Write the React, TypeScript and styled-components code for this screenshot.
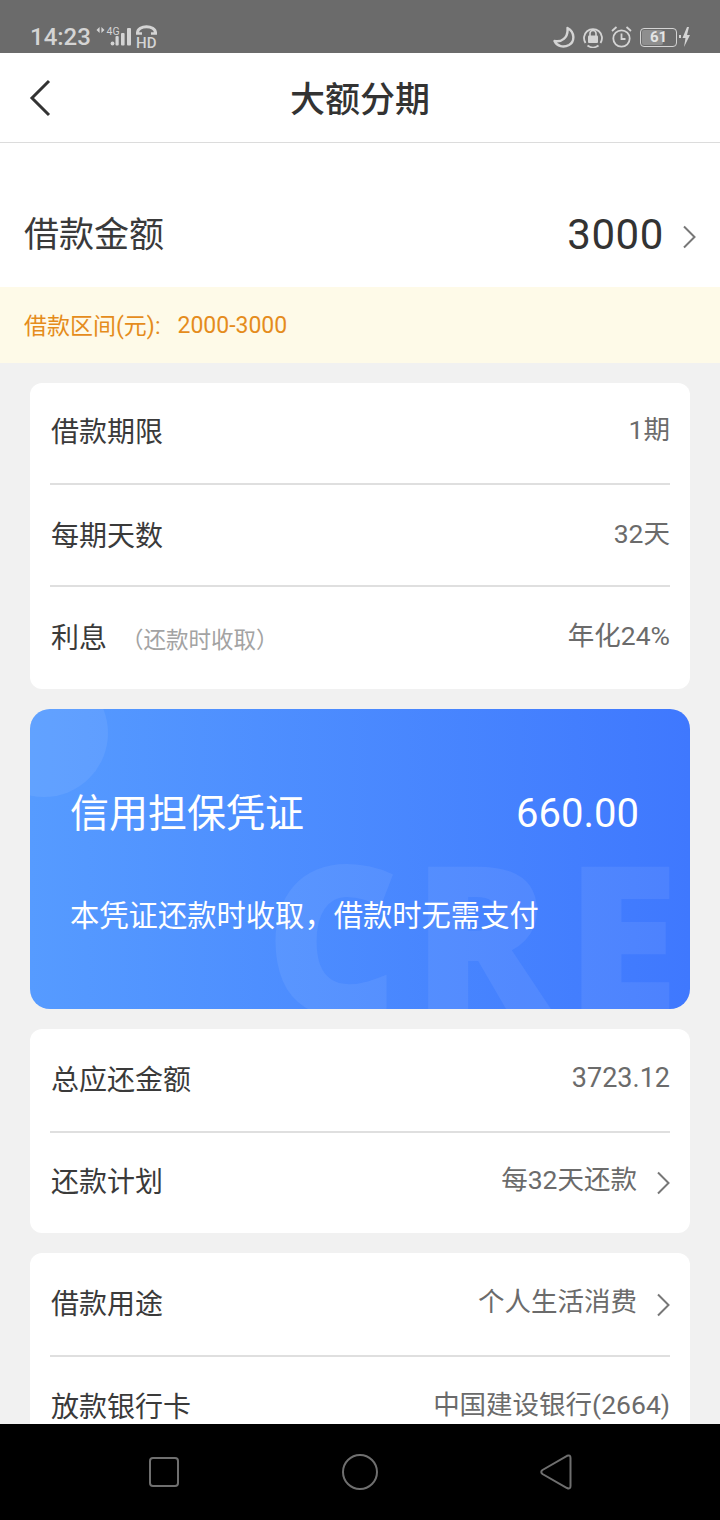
import styled, { createGlobalStyle } from 'styled-components';

const GlobalStyle = createGlobalStyle`
  html, body {
    margin: 0;
    padding: 0;
    background: #000;
  }
  * {
    box-sizing: border-box;
  }
`;

const Screen = styled.div`
  width: 720px;
  height: 1520px;
  display: flex;
  flex-direction: column;
  overflow: hidden;
  background: #f1f1f1;
  font-family: Roboto, "Noto Sans CJK SC", sans-serif;
  color: #333;
`;

const StatusBar = styled.div`
  height: 53px;
  flex: none;
  background: #6b6b6b;
  color: #d4d4d4;
  display: flex;
  align-items: center;
  justify-content: space-between;
  padding: 21px 30px 0;
`;

const StatusGroup = styled.div<{ $gap: number }>`
  display: flex;
  align-items: center;
  gap: ${(p) => p.$gap}px;
`;

const Clock = styled.span`
  font-size: 24px;
  font-weight: 500;
  line-height: 28px;
`;

const HeaderBar = styled.header`
  height: 90px;
  flex: none;
  background: #fff;
  border-bottom: 1px solid #dcdcdc;
  padding-top: 6px;
  display: flex;
  align-items: center;
  justify-content: center;
  position: relative;
`;

const BackButton = styled.svg`
  position: absolute;
  left: 29px;
  top: 26px;
`;

const Title = styled.h1`
  margin: 0;
  font-size: 35px;
  font-weight: 500;
  color: #333;
  line-height: 48px;
`;

const Content = styled.main`
  flex: 1;
  min-height: 0;
  overflow: hidden;
`;

const AmountRow = styled.div`
  height: 144px;
  padding: 41px 24px 0;
  background: #fff;
  display: flex;
  align-items: center;
  justify-content: space-between;
`;

const AmountLabel = styled.span`
  font-size: 35px;
  line-height: 50px;
  color: #3a3a3a;
`;

const AmountValue = styled.span`
  display: flex;
  align-items: center;
  gap: 19px;
  font-size: 42px;
  line-height: 50px;
  color: #333;
  letter-spacing: 0.6px;
  margin-top: -2px;
`;

const Notice = styled.div`
  height: 76px;
  padding: 0 24px;
  background: #fefae8;
  color: #e58c1c;
  display: flex;
  align-items: center;
  font-size: 23px;
  gap: 17px;
`;

const NoticeLabel = styled.span`
  margin-top: -3px;
`;

const Stack = styled.div`
  display: flex;
  flex-direction: column;
  gap: 20px;
  padding: 20px 30px;
`;

const Card = styled.section`
  background: #fff;
  border-radius: 12px;
  padding: 0 20px;
`;

const Row = styled.div<{ $height: number; $nudge?: number }>`
  height: ${(p) => p.$height}px;
  padding-top: ${(p) => p.$nudge ?? 0}px;
  display: flex;
  align-items: center;
  justify-content: space-between;
  border-bottom: 2px solid #dfdfdf;

  &:last-child {
    border-bottom: none;
  }
`;

const RowLabel = styled.span`
  font-size: 28px;
  line-height: 40px;
  color: #3a3a3a;
  display: flex;
  align-items: center;
  padding-left: 1px;
`;

const RowHint = styled.span`
  font-size: 22.5px;
  color: #a3a3a3;
  margin-left: 14px;
  margin-top: 2px;
`;

const RowValue = styled.span<{ $size?: number }>`
  font-size: ${(p) => p.$size ?? 26.5}px;
  line-height: 40px;
  color: #6b6b6b;
  display: flex;
  align-items: center;
  gap: 20px;
  margin-top: -6px;
`;

const CreditCard = styled.section`
  height: 300px;
  border-radius: 20px;
  background: linear-gradient(90deg, #569bff 0%, #3f78fe 100%);
  color: #fff;
  padding: 81px 51px 0 40px;
  position: relative;
  overflow: hidden;
`;

const Bubble = styled.div`
  position: absolute;
  left: -50px;
  top: -40px;
  width: 128px;
  height: 128px;
  border-radius: 50%;
  background: rgba(255, 255, 255, 0.07);
`;

const Watermark = styled.div`
  position: absolute;
  left: 235px;
  top: 116px;
  font-family: "Open Sans", "Liberation Sans", sans-serif;
  font-size: 207px;
  line-height: 220px;
  font-weight: 800;
  letter-spacing: 13px;
  color: rgba(255, 255, 255, 0.07);
  white-space: nowrap;
`;

const CreditTop = styled.div`
  position: relative;
  display: flex;
  justify-content: space-between;
  align-items: center;
  height: 48px;
`;

const CreditTitle = styled.span`
  font-size: 39px;
  line-height: 48px;
`;

const CreditAmount = styled.span`
  font-size: 40px;
  line-height: 48px;
`;

const CreditNote = styled.p`
  position: relative;
  margin: 57px 0 0;
  font-size: 29.3px;
  line-height: 42px;
`;

const NavBar = styled.nav`
  height: 96px;
  flex: none;
  background: #000;
  display: grid;
  grid-template-columns: repeat(3, 196px);
  justify-content: center;
  align-items: center;
  justify-items: center;
`;

const NavIcon = styled.svg`
  display: block;
`;

const ChevronIcon = styled.svg`
  margin-top: 5px;
`;

const Chevron = () => (
  <ChevronIcon width="13" height="24" viewBox="0 0 13 24" fill="none">
    <path d="M1 1.5 11.5 12 1 22.5" stroke="#777" strokeWidth="2" />
  </ChevronIcon>
);

const SignalIcon = () => (
  <svg width="35" height="24" viewBox="0 0 35 24" fill="none">
    <path d="M3.6 2 V8 L0.5 5Z M5.4 2 V8 L8.5 5Z" fill="#d4d4d4" />
    <text x="10.5" y="10" fontSize="10.5" fontFamily="Roboto" fill="#d4d4d4">4G</text>
    <circle cx="16.5" cy="18.5" r="1.9" fill="#d4d4d4" />
    <rect x="19.5" y="11" width="3.2" height="9.5" rx="1" fill="#d4d4d4" />
    <rect x="25" y="8" width="3.6" height="12.5" rx="1" fill="#d4d4d4" />
    <rect x="31" y="3" width="4" height="17.5" rx="1" fill="#d4d4d4" />
  </svg>
);

const HdIcon = () => (
  <svg width="21" height="24" viewBox="0 0 21 24" fill="none">
    <path d="M1.5 8 C1.5 -0.5 19.5 -0.5 19.5 8" stroke="#d4d4d4" strokeWidth="3" />
    <path d="M0 8.5 H6 M15 8.5 H21" stroke="#d4d4d4" strokeWidth="2.4" />
    <text x="0" y="22.5" fontSize="15" fontWeight="500" fontFamily="Roboto" fill="#d4d4d4">HD</text>
  </svg>
);

const MoonIcon = () => (
  <svg width="22" height="22" viewBox="0 0 22 22" fill="none">
    <path d="M1.5 15 C8 16.5 15.5 12 14.5 2 C22 6 22 15.5 16 19 C10.5 22 4 20.5 1.5 15Z" stroke="#d4d4d4" strokeWidth="2.4" strokeLinejoin="round" />
  </svg>
);

const LockIcon = () => (
  <svg width="20" height="22" viewBox="0 0 20 22" fill="none">
    <path d="M2.5 17 A9 9 0 1 1 17.5 17" stroke="#d4d4d4" strokeWidth="1.8" />
    <path d="M4.5 19.5 A9 9 0 0 0 15.5 19.5" stroke="#d4d4d4" strokeWidth="1.8" />
    <rect x="5" y="9.5" width="10" height="7.5" rx="1" fill="#d4d4d4" />
    <path d="M7 10 V7.5 A3 3 0 0 1 13 7.5 V10" stroke="#d4d4d4" strokeWidth="1.6" />
  </svg>
);

const AlarmIcon = () => (
  <svg width="21" height="22" viewBox="0 0 21 22" fill="none">
    <circle cx="10.5" cy="12.5" r="8.2" stroke="#d4d4d4" strokeWidth="1.8" />
    <path d="M10.5 7.5 V13 H14.5" stroke="#d4d4d4" strokeWidth="1.8" />
    <path d="M1 5 L5.5 1 M20 5 L15.5 1" stroke="#d4d4d4" strokeWidth="1.8" />
  </svg>
);

const BatteryBox = styled.div`
  width: 37px;
  height: 19px;
  border: 1.5px solid #d4d4d4;
  border-radius: 4px;
  position: relative;
  overflow: hidden;
  display: flex;
  align-items: center;
  justify-content: center;
  font-size: 15px;
  font-weight: 700;
  color: #e4e4e4;
`;

const BatteryFill = styled.div`
  position: absolute;
  left: 1px;
  top: 1px;
  bottom: 1px;
  background: #8e8e8e;
  border-radius: 2px;
`;

const BatteryLevel = styled.span`
  position: relative;
`;

const BoltIcon = () => (
  <svg width="11" height="20" viewBox="0 0 11 20" fill="none">
    <rect x="0" y="8" width="2" height="3" fill="#d4d4d4" />
    <path d="M8 0 L3.5 11 H6.5 L5 20 L11 8 H8 L10 0Z" fill="#d4d4d4" />
  </svg>
);

export default function App() {
  const batteryLevel = 61;

  return (
    <>
      <GlobalStyle />
      <Screen>
        <StatusBar>
          <StatusGroup $gap={5}>
            <Clock>14:23</Clock>
            <SignalIcon />
            <HdIcon />
          </StatusGroup>
          <StatusGroup $gap={8}>
            <MoonIcon />
            <LockIcon />
            <AlarmIcon />
            <StatusGroup $gap={2}>
              <BatteryBox>
                <BatteryFill style={{ width: `${batteryLevel}%` }} />
                <BatteryLevel>{batteryLevel}</BatteryLevel>
              </BatteryBox>
              <BoltIcon />
            </StatusGroup>
          </StatusGroup>
        </StatusBar>

        <HeaderBar>
          <BackButton width="22" height="38" viewBox="0 0 22 38" fill="none">
            <path d="M20 2 L3 19 L20 36" stroke="#333" strokeWidth="3" />
          </BackButton>
          <Title>大额分期</Title>
        </HeaderBar>

        <Content>
          <AmountRow>
            <AmountLabel>借款金额</AmountLabel>
            <AmountValue>
              3000
              <Chevron />
            </AmountValue>
          </AmountRow>
          <Notice>
            <NoticeLabel>借款区间(元):</NoticeLabel>
            <span>2000-3000</span>
          </Notice>

          <Stack>
            <Card>
              <Row $height={102}>
                <RowLabel>借款期限</RowLabel>
                <RowValue>1期</RowValue>
              </Row>
              <Row $height={102} $nudge={4}>
                <RowLabel>每期天数</RowLabel>
                <RowValue>32天</RowValue>
              </Row>
              <Row $height={102} $nudge={2}>
                <RowLabel>
                  利息
                  <RowHint>{'\uFF08还款时收取\uFF09'}</RowHint>
                </RowLabel>
                <RowValue>年化24%</RowValue>
              </Row>
            </Card>

            <CreditCard>
              <Bubble />
              <Watermark>CRE</Watermark>
              <CreditTop>
                <CreditTitle>信用担保凭证</CreditTitle>
                <CreditAmount>660.00</CreditAmount>
              </CreditTop>
              <CreditNote>{'本凭证还款时收取\uFF0C借款时无需支付'}</CreditNote>
            </CreditCard>

            <Card>
              <Row $height={104} $nudge={2}>
                <RowLabel>总应还金额</RowLabel>
                <RowValue $size={27}>3723.12</RowValue>
              </Row>
              <Row $height={100}>
                <RowLabel>还款计划</RowLabel>
                <RowValue>
                  每32天还款
                  <Chevron />
                </RowValue>
              </Row>
            </Card>

            <Card>
              <Row $height={104} $nudge={2}>
                <RowLabel>借款用途</RowLabel>
                <RowValue>
                  个人生活消费
                  <Chevron />
                </RowValue>
              </Row>
              <Row $height={102}>
                <RowLabel>放款银行卡</RowLabel>
                <RowValue>中国建设银行(2664)</RowValue>
              </Row>
            </Card>
          </Stack>
        </Content>

        <NavBar>
          <NavIcon width="30" height="30" viewBox="0 0 30 30" fill="none">
            <rect x="1" y="1" width="28" height="28" rx="3" stroke="#6f6f6f" strokeWidth="2" />
          </NavIcon>
          <NavIcon width="36" height="36" viewBox="0 0 36 36" fill="none">
            <circle cx="18" cy="18" r="17" stroke="#6f6f6f" strokeWidth="2" />
          </NavIcon>
          <NavIcon width="32" height="36" viewBox="0 0 32 36" fill="none">
            <path d="M2.5 16 L27 1.8 Q30.5 0.5 30.5 4 V32 Q30.5 35.5 27 34 L2.5 20 Q0 18 2.5 16Z" stroke="#6f6f6f" strokeWidth="2" />
          </NavIcon>
        </NavBar>
      </Screen>
    </>
  );
}
